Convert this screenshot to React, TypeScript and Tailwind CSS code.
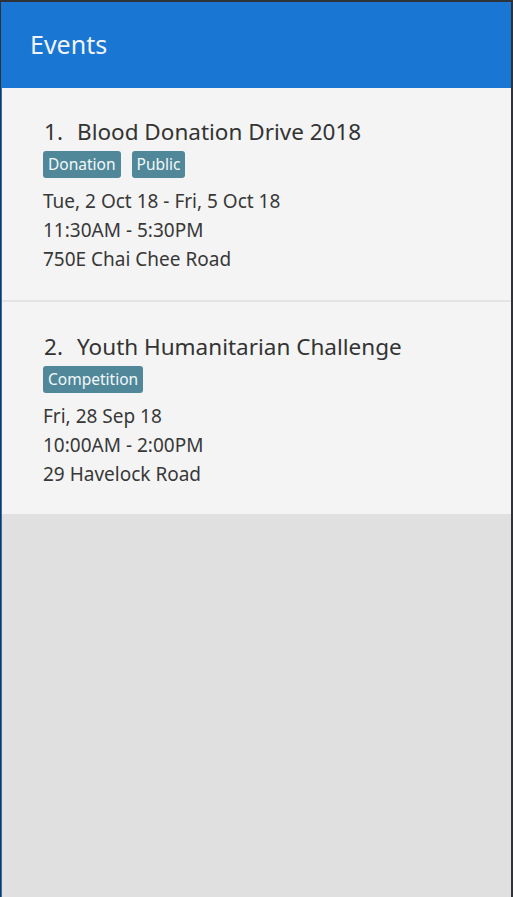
import React from "react";

type EventItem = {
  title: string;
  tags: string[];
  date: string;
  time: string;
  venue: string;
};

const events: EventItem[] = [
  {
    title: "Blood Donation Drive 2018",
    tags: ["Donation", "Public"],
    date: "Tue, 2 Oct 18 - Fri, 5 Oct 18",
    time: "11:30AM - 5:30PM",
    venue: "750E Chai Chee Road",
  },
  {
    title: "Youth Humanitarian Challenge",
    tags: ["Competition"],
    date: "Fri, 28 Sep 18",
    time: "10:00AM - 2:00PM",
    venue: "29 Havelock Road",
  },
];

export default function App() {
  return (
    <div
      className="flex h-[897px] w-[513px] flex-col overflow-hidden border-t-2 border-r-2 border-l border-t-[#2e3239] border-r-[#2e3239] border-l-[#2e3239] bg-[#e0e0e0]"
      style={{ fontFamily: '"Noto Sans", "Open Sans", sans-serif' }}
    >
      <div className="flex flex-1 flex-col border-l border-l-[#1976d2]">
        <header className="flex h-[86px] shrink-0 items-center bg-[#1976d2] pl-[28px]">
          <h1 className="text-[25px] text-[#f1f5fb]">Events</h1>
        </header>

        <ul className="flex flex-col">
          {events.map((ev, i) => (
            <li
              key={ev.title}
              className={
                i === 0
                  ? "h-[214px] border-b-2 border-[#e4e4e4] bg-[#f4f4f4] pl-[41px] pt-[29px]"
                  : "h-[212px] bg-[#f4f4f4] pl-[41px] pt-[30px]"
              }
            >
              <div className="flex text-[22.5px] leading-[30px] text-[#333333]">
                <span className="w-[34px] pl-[1px]">{i + 1}.</span>
                <span>{ev.title}</span>
              </div>
              <div className="mt-[4px] flex gap-[11px]">
                {ev.tags.map((t) => (
                  <span
                    key={t}
                    className="rounded-[3px] bg-[#50889a] px-[5px] text-[15.5px] leading-[27px] text-[#f4f8fa]"
                  >
                    {t}
                  </span>
                ))}
              </div>
              <div className="mt-[9px] text-[19px] leading-[29px] text-[#383838]">
                <div>{ev.date}</div>
                <div>{ev.time}</div>
                <div>{ev.venue}</div>
              </div>
            </li>
          ))}
        </ul>
      </div>
    </div>
  );
}
